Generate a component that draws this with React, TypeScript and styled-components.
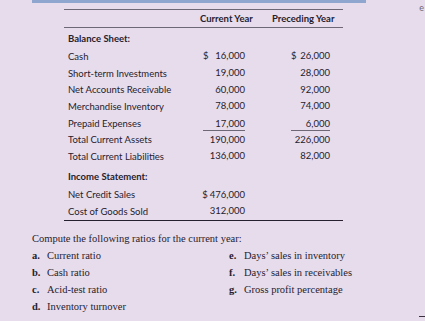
import styled, { createGlobalStyle } from 'styled-components'

const GlobalStyle = createGlobalStyle`
  html, body {
    margin: 0;
    padding: 0;
    background: #e6dcec;
    overflow: hidden;
  }
  #root {
    width: 425px;
    height: 321px;
    overflow: hidden;
  }
`

type Row =
  | { kind: 'section'; label: string }
  | { kind: 'data'; label: string; cur?: string; prev?: string; dollar?: 'both' | 'cur'; underline?: boolean }

const ROWS: Row[] = [
  { kind: 'section', label: 'Balance Sheet:' },
  { kind: 'data', label: 'Cash', cur: '16,000', prev: '26,000', dollar: 'both' },
  { kind: 'data', label: 'Short-term Investments', cur: '19,000', prev: '28,000' },
  { kind: 'data', label: 'Net Accounts Receivable', cur: '60,000', prev: '92,000' },
  { kind: 'data', label: 'Merchandise Inventory', cur: '78,000', prev: '74,000' },
  { kind: 'data', label: 'Prepaid Expenses', cur: '17,000', prev: '6,000', underline: true },
  { kind: 'data', label: 'Total Current Assets', cur: '190,000', prev: '226,000' },
  { kind: 'data', label: 'Total Current Liabilities', cur: '136,000', prev: '82,000' },
  { kind: 'section', label: 'Income Statement:' },
  { kind: 'data', label: 'Net Credit Sales', cur: '476,000', dollar: 'cur' },
  { kind: 'data', label: 'Cost of Goods Sold', cur: '312,000' },
]

const LEFT_ITEMS = [
  ['a.', 'Current ratio'],
  ['b.', 'Cash ratio'],
  ['c.', 'Acid-test ratio'],
  ['d.', 'Inventory turnover'],
]

const RIGHT_ITEMS = [
  ['e.', 'Days\u2019 sales in inventory'],
  ['f.', 'Days\u2019 sales in receivables'],
  ['g.', 'Gross profit percentage'],
]

export default function App() {
  return (
    <Page>
      <GlobalStyle />
      <TopStrip>
        <BlueBar />
        <CutLetter>e</CutLetter>
      </TopStrip>

      <Table>
        <HeadCell />
        <HeadCell $indent={0}>Current Year</HeadCell>
        <HeadCell $indent={20}>Preceding Year</HeadCell>
        {ROWS.map((r, i) =>
          r.kind === 'section' ? (
            <SectionLabel key={i} $first={i === 0}>{r.label}</SectionLabel>
          ) : (
            <DataRow key={i}>
              <Label>{r.label}</Label>
              <AmountCol $pad={7}>
                {r.cur && (
                  <Amount $w={42} $underline={r.underline} $tight={r.dollar === 'cur'}>
                    {r.dollar && <span>$</span>}
                    <span>{r.cur}</span>
                  </Amount>
                )}
              </AmountCol>
              <AmountCol $pad={13}>
                {r.prev && (
                  <Amount $w={39} $underline={r.underline}>
                    {r.dollar === 'both' && <span>$</span>}
                    <span>{r.prev}</span>
                  </Amount>
                )}
              </AmountCol>
            </DataRow>
          )
        )}
      </Table>

      <Problem>
        <Prompt>Compute the following ratios for the current year:</Prompt>
        <Ratios>
          <RatioList>
            {LEFT_ITEMS.map(([k, t]) => (
              <RatioItem key={k}>
                <RatioKey>{k}</RatioKey>
                {t}
              </RatioItem>
            ))}
          </RatioList>
          <RatioList>
            {RIGHT_ITEMS.map(([k, t]) => (
              <RatioItem key={k}>
                <RatioKey>{k}</RatioKey>
                {t}
              </RatioItem>
            ))}
          </RatioList>
        </Ratios>
      </Problem>

      <Footer>
        <Dash />
      </Footer>
    </Page>
  )
}

// ── Styled Components ────────────────────────────────────────────────────────

const Page = styled.div`
  width: 425px;
  height: 321px;
  display: flex;
  flex-direction: column;
  color: #26212d;
  font-family: Lato, 'Open Sans', sans-serif;
`

const TopStrip = styled.div`
  display: flex;
  align-items: flex-start;
  height: 9px;
`

const BlueBar = styled.div`
  margin-left: 32px;
  width: 334px;
  height: 3px;
  background: #8fa7cf;
`

const CutLetter = styled.div`
  margin-left: auto;
  margin-right: 1px;
  margin-top: 3px;
  font-size: 9px;
  line-height: 9px;
  color: #6f6878;
`

const Table = styled.div`
  margin-left: 64px;
  width: 279px;
  display: grid;
  grid-template-columns: 136px 52px 91px;
  border-top: 1.5px solid #6e6876;
  border-bottom: 1.5px solid #26212d;
`

const HeadCell = styled.div<{ $indent?: number }>`
  height: 17px;
  display: flex;
  align-items: center;
  padding-left: ${(p) => p.$indent ?? 0}px;
  font-size: 9.5px;
  font-weight: 700;
  white-space: nowrap;
  border-bottom: 1.5px solid #6e6876;
`

const SectionLabel = styled.div<{ $first?: boolean }>`
  grid-column: 1 / -1;
  height: ${(p) => (p.$first ? '20px' : '21.4px')};
  padding: ${(p) => (p.$first ? '0' : '2px')} 0 0 4px;
  box-sizing: border-box;
  display: flex;
  align-items: center;
  font-size: 9.5px;
  font-weight: 700;
`

const DataRow = styled.div`
  grid-column: 1 / -1;
  display: grid;
  grid-template-columns: subgrid;
  height: 16.7px;
  align-items: center;
`

const Label = styled.div`
  padding-left: 4px;
  font-size: 9.5px;
  white-space: nowrap;
`

const AmountCol = styled.div<{ $pad: number }>`
  display: flex;
  justify-content: flex-end;
  padding-right: ${(p) => p.$pad}px;
`

const Amount = styled.div<{ $w: number; $underline?: boolean; $tight?: boolean }>`
  width: ${(p) => p.$w}px;
  display: flex;
  justify-content: ${(p) => (p.$tight ? 'flex-end' : 'space-between')};
  gap: 2px;
  font-size: 9.5px;
  line-height: 12px;
  padding-top: ${(p) => (p.$underline ? '2px' : '0')};
  border-bottom: ${(p) => (p.$underline ? '1.5px solid #6e6876' : 'none')};

  & > span:only-child {
    margin-left: auto;
  }
`

const Problem = styled.div`
  margin-left: 32px;
  margin-top: 9px;
  font-family: 'Liberation Serif', 'Times New Roman', serif;
  font-size: 10.5px;
  color: #26212d;
`

const Prompt = styled.div`
  height: 17px;
  line-height: 17px;
`

const Ratios = styled.div`
  display: grid;
  grid-template-columns: 197px 1fr;
`

const RatioList = styled.div`
  display: flex;
  flex-direction: column;
`

const RatioItem = styled.div`
  height: 17px;
  line-height: 17px;
  display: flex;
  white-space: nowrap;
`

const RatioKey = styled.span`
  width: 15px;
  font-weight: 700;
`

const Footer = styled.div`
  display: flex;
  justify-content: flex-end;
  margin-top: 1px;
`

const Dash = styled.div`
  width: 6px;
  height: 1px;
  background: #3a3040;
`
